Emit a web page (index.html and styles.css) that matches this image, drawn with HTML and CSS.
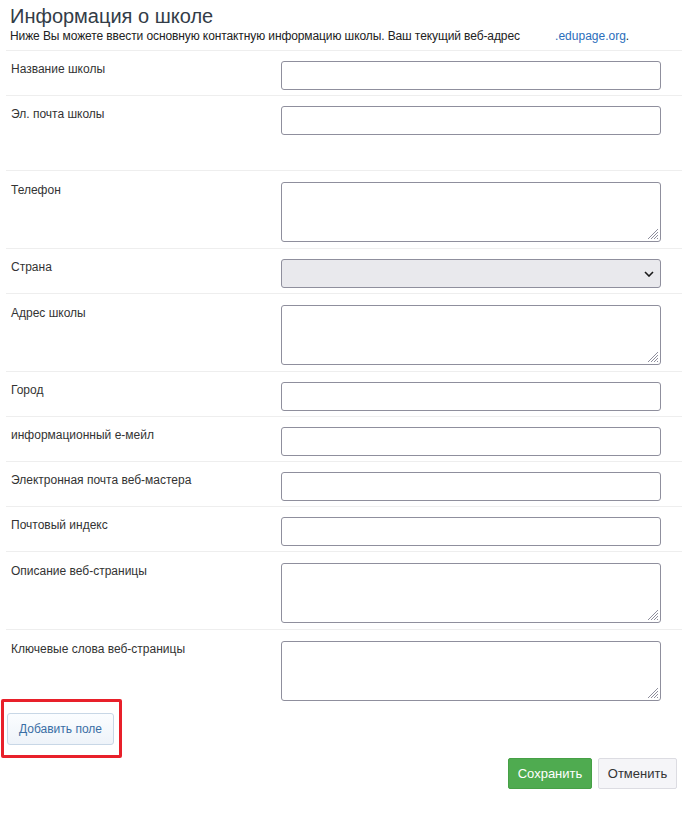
FILE: index.html
```html
<!DOCTYPE html>
<html lang="ru">
<head>
    <meta charset="UTF-8">
    <meta name="viewport" content="width=device-width, initial-scale=1.0">
    <title>Информация о школе</title>
    <link rel="stylesheet" href="styles.css">
</head>
<body>
    <div class="page">
        <div class="header">
            <h1>Информация о школе</h1>
            <p class="intro">Ниже Вы можете ввести основную контактную информацию школы. Ваш текущий веб-адрес <span class="subdomain"></span><a href="#">.edupage.org</a>.</p>
        </div>

        <div class="row">
            <label for="name">Название школы</label>
            <input type="text" id="name">
        </div>
        <div class="row row-tall">
            <label for="email">Эл. почта школы</label>
            <input type="text" id="email">
        </div>
        <div class="row row-area">
            <label for="phone">Телефон</label>
            <div class="area-wrap">
                <textarea id="phone"></textarea>
                <svg class="grip" width="12" height="12" viewBox="0 0 12 12"><path d="M11 1L1 11M11 4L4 11M11 7L7 11M11 10L10 11" stroke="#8f8f9d" stroke-width="1"/></svg>
            </div>
        </div>
        <div class="row">
            <label for="country">Страна</label>
            <div class="select-wrap">
                <select id="country"><option></option></select>
                <svg class="chevron" width="10" height="6" viewBox="0 0 10 6"><path d="M1 1L5 5L9 1" fill="none" stroke="#1a1a1a" stroke-width="1.6"/></svg>
            </div>
        </div>
        <div class="row row-area">
            <label for="address">Адрес школы</label>
            <div class="area-wrap">
                <textarea id="address"></textarea>
                <svg class="grip" width="12" height="12" viewBox="0 0 12 12"><path d="M11 1L1 11M11 4L4 11M11 7L7 11M11 10L10 11" stroke="#8f8f9d" stroke-width="1"/></svg>
            </div>
        </div>
        <div class="row">
            <label for="city">Город</label>
            <input type="text" id="city">
        </div>
        <div class="row">
            <label for="info">информационный е-мейл</label>
            <input type="text" id="info">
        </div>
        <div class="row">
            <label for="webmaster">Электронная почта веб-мастера</label>
            <input type="text" id="webmaster">
        </div>
        <div class="row">
            <label for="zip">Почтовый индекс</label>
            <input type="text" id="zip">
        </div>
        <div class="row row-area">
            <label for="desc">Описание веб-страницы</label>
            <div class="area-wrap">
                <textarea id="desc"></textarea>
                <svg class="grip" width="12" height="12" viewBox="0 0 12 12"><path d="M11 1L1 11M11 4L4 11M11 7L7 11M11 10L10 11" stroke="#8f8f9d" stroke-width="1"/></svg>
            </div>
        </div>
        <div class="row row-area row-last">
            <label for="keywords">Ключевые слова веб-страницы</label>
            <div class="area-wrap">
                <textarea id="keywords"></textarea>
                <svg class="grip" width="12" height="12" viewBox="0 0 12 12"><path d="M11 1L1 11M11 4L4 11M11 7L7 11M11 10L10 11" stroke="#8f8f9d" stroke-width="1"/></svg>
            </div>
        </div>

        <div class="highlight">
            <button type="button" class="btn-add">Добавить поле</button>
        </div>

        <div class="actions">
            <button type="submit" class="btn btn-save">Сохранить</button>
            <button type="button" class="btn btn-cancel">Отменить</button>
        </div>
    </div>
</body>
</html>
```

FILE: styles.css
```css
body {
    margin: 0;
    font-family: "Liberation Sans", Arial, sans-serif;
    background-color: #fff;
    color: #333;
}

.page {
    margin: 0 5px 0 6px;
}

.header {
    padding: 4px 4px 6px;
    border-bottom: 1px solid #eee;
}

h1 {
    margin: 0;
    font-size: 20px;
    line-height: 24px;
    font-weight: normal;
    color: #333c47;
}

.intro {
    margin: 0;
    font-size: 12px;
    line-height: 16px;
    letter-spacing: -0.1px;
    color: #222;
}

.subdomain {
    display: inline-block;
    width: 32px;
}

.intro a {
    letter-spacing: 0;
    color: #2a6ebb;
    text-decoration: none;
}

.row {
    display: grid;
    grid-template-columns: 275px 380px;
    padding: 10px 0 5px;
    border-bottom: 1px solid #eee;
}

.row-tall {
    padding-bottom: 35px;
}

.row-area {
    padding: 11px 0 6px;
}

.row-last {
    border-bottom: none;
    padding-bottom: 0;
}

label {
    padding-left: 5px;
    font-size: 12px;
    line-height: 16px;
    color: #333;
}

input[type="text"],
select,
textarea {
    display: block;
    box-sizing: border-box;
    width: 380px;
    margin: 0;
    border: 1px solid #8f8f9d;
    border-radius: 3px;
    background-color: #fff;
    font-family: inherit;
    font-size: 12px;
}

input[type="text"] {
    height: 29px;
    padding: 4px 6px;
}

textarea {
    height: 60px;
    padding: 4px 6px;
    resize: none;
}

.area-wrap,
.select-wrap {
    position: relative;
    width: 380px;
}

.grip {
    position: absolute;
    right: 2px;
    bottom: 2px;
}

select {
    height: 29px;
    padding: 0 6px;
    appearance: none;
    background-color: #e9e9ed;
}

.chevron {
    position: absolute;
    right: 7px;
    top: 12px;
    pointer-events: none;
}

.highlight {
    display: inline-block;
    margin: -2px 0 0 -5px;
    padding: 11px 5px 10px 3px;
    border: 3px solid #e8202a;
    border-radius: 2px;
}

.btn-add {
    display: block;
    width: 107px;
    height: 32px;
    padding: 0;
    border: 1px solid #c8d7e6;
    border-radius: 3px;
    background: linear-gradient(#fbfdff, #eef3f9);
    color: #3a6ea5;
    font-family: inherit;
    font-size: 12px;
    cursor: pointer;
}

.actions {
    display: flex;
    justify-content: flex-end;
    gap: 6px;
    margin-right: 5px;
}

.btn {
    height: 31px;
    padding: 0;
    border-radius: 2px;
    font-family: inherit;
    font-size: 13px;
    cursor: pointer;
}

.btn-save {
    width: 84px;
    border: 1px solid #46a046;
    background-color: #4fab50;
    color: #fff;
}

.btn-cancel {
    width: 79px;
    border: 1px solid #dcdce2;
    background-color: #f5f5f8;
    color: #333;
}
```
